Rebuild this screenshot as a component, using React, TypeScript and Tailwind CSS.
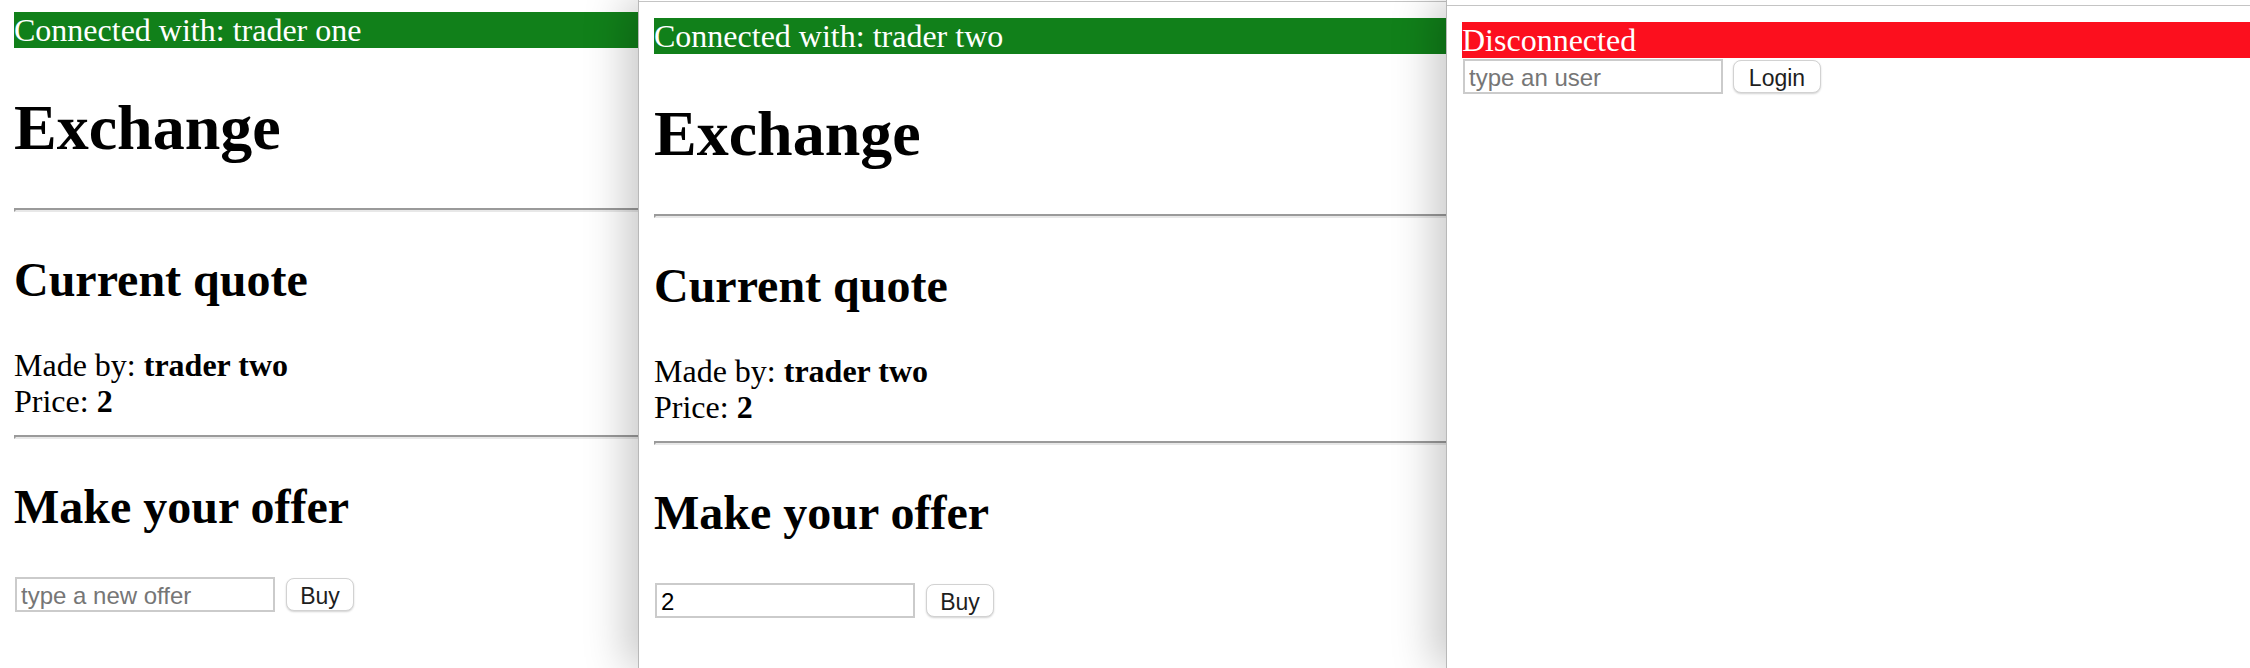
import React from 'react';

interface ExchangeProps {
  trader: string;
  offer?: string;
}

// status strip on top of every client
function StatusBar({ text, connected }: { text: string; connected: boolean }) {
  return (
    <div
      className={`${connected ? 'bg-[#11801a]' : 'bg-[#fc0f1e]'} text-white text-[32px] leading-[36px] whitespace-nowrap`}
    >
      {text}
    </div>
  );
}

function Rule() {
  return (
    <hr className="h-0 border-0 border-t-2 border-t-[#9a9a9a] border-l-2 border-l-[#9a9a9a] border-b-2 border-b-[#e8e8e8]" />
  );
}

function TextInput({ placeholder, value }: { placeholder: string; value?: string }) {
  return (
    <input
      className="ml-px w-[260px] h-[35px] border-2 border-[#cbcbcb] bg-white px-1 pt-[2px] text-[24px] text-black font-['Liberation_Sans',sans-serif] placeholder:text-[#767676] outline-none"
      placeholder={placeholder}
      defaultValue={value}
    />
  );
}

function MacButton({ label, width }: { label: string; width: string }) {
  return (
    <button
      className={`${width} h-[33px] rounded-[8px] border border-[#d2d2d2] bg-white text-[23px] text-[#1e1e1e] font-['Liberation_Sans',sans-serif] shadow-[0_1px_2px_rgba(0,0,0,0.18)]`}
    >
      {label}
    </button>
  );
}

function Exchange({ trader, offer }: ExchangeProps) {
  return (
    <>
      <StatusBar text={`Connected with: ${trader}`} connected />
      <h1 className="my-[43px] text-[64px] leading-[74px] font-bold whitespace-nowrap">Exchange</h1>
      <Rule />
      <h2 className="my-[40px] text-[48px] leading-[55px] font-bold whitespace-nowrap">Current quote</h2>
      <div className="text-[32px] leading-[36px] whitespace-nowrap">
        <div>
          Made by: <b>trader two</b>
        </div>
        <div>
          Price: <b>2</b>
        </div>
      </div>
      <div className="mt-4">
        <Rule />
      </div>
      <h2 className="my-[40px] text-[48px] leading-[55px] font-bold whitespace-nowrap">Make your offer</h2>
      <div className="flex items-center pt-[3px]">
        <TextInput placeholder="type a new offer" value={offer} />
        <div className="ml-[11px]">
          <MacButton label="Buy" width="w-[68px]" />
        </div>
      </div>
    </>
  );
}

export default function App() {
  return (
    <div className="flex w-[2250px] h-[668px] overflow-hidden bg-white text-black font-['Liberation_Serif',serif]">
      {/* first client, partly hidden under the second */}
      <section className="w-[638px] shrink-0 h-full overflow-hidden bg-white">
        <div className="pt-[12px] pl-[14px]">
          <Exchange trader="trader one" />
        </div>
      </section>

      <section className="relative z-10 w-[808px] shrink-0 h-full overflow-hidden border-l border-[#b8b8b8] bg-white shadow-[-12px_0_40px_rgba(0,0,0,0.22)]">
        <div className="mt-px h-px bg-[#c4c4c4]" />
        <div className="pt-4 pl-[15px]">
          <Exchange trader="trader two" offer="2" />
        </div>
      </section>

      <section className="relative z-20 w-[804px] shrink-0 h-full overflow-hidden border-l border-[#b8b8b8] bg-white shadow-[-12px_0_40px_rgba(0,0,0,0.22)]">
        <div className="mt-[5px] h-px bg-[#c4c4c4]" />
        <div className="pt-4 pl-[15px]">
          <StatusBar text="Disconnected" connected={false} />
          <div className="flex items-start pt-px">
            <TextInput placeholder="type an user" />
            <div className="ml-[10px] mt-px">
              <MacButton label="Login" width="w-[88px]" />
            </div>
          </div>
        </div>
      </section>
    </div>
  );
}
